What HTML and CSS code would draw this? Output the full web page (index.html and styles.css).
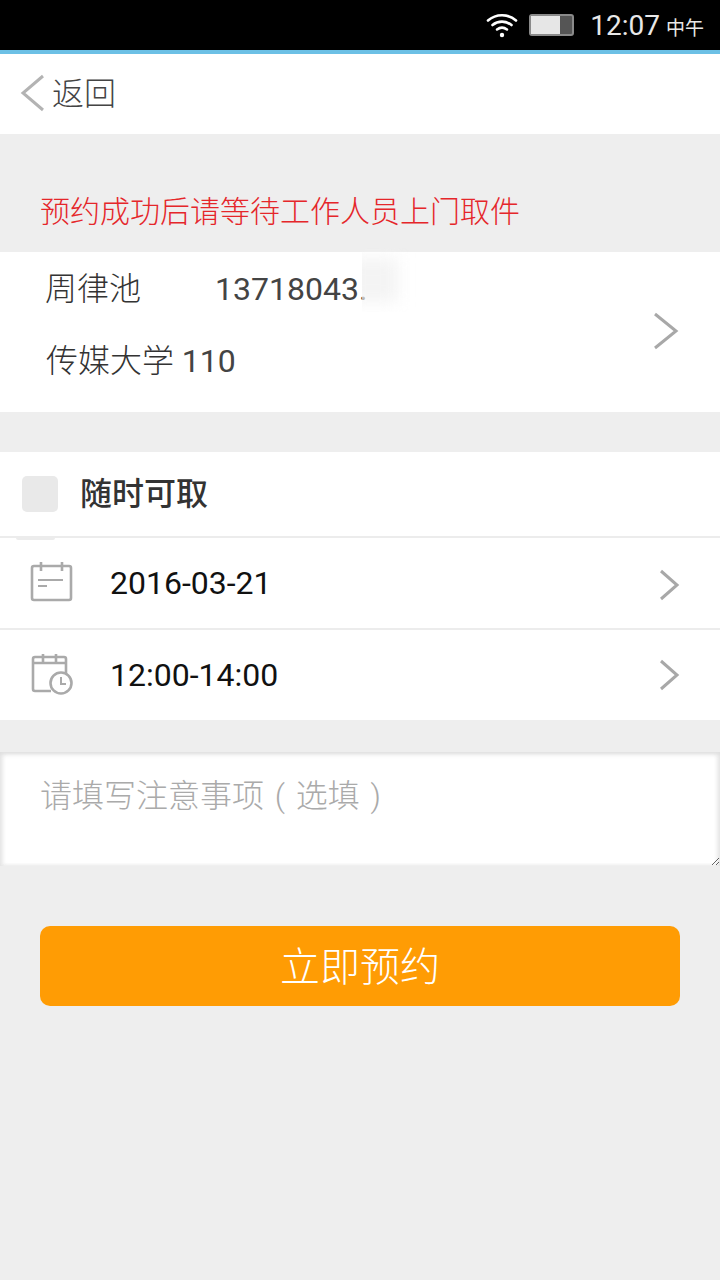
FILE: index.html
```html
<!DOCTYPE html>
<html lang="zh-CN">
<head>
    <meta charset="UTF-8">
    <meta name="viewport" content="width=device-width, initial-scale=1.0">
    <link rel="stylesheet" href="styles.css">
    <title>预约</title>
</head>
<body>
    <div class="status-bar">
        <svg class="wifi" width="32" height="26" viewBox="0 0 32 26" fill="none" stroke="#fff" stroke-width="2.6" stroke-linecap="round">
            <path d="M2 8.5C10 1.5 22 1.5 30 8.5"/>
            <path d="M6.5 13C12 8.5 20 8.5 25.5 13"/>
            <path d="M11 17.5C14 15.2 18 15.2 21 17.5"/>
            <circle cx="16" cy="23" r="2.2" fill="#fff" stroke="none"/>
        </svg>
        <div class="battery"><div class="battery-level"></div></div>
        <span class="clock">12:07</span>
        <span class="clock-suffix">中午</span>
    </div>

    <div class="top-bar">
        <svg class="back-icon" width="26" height="38" viewBox="0 0 26 38" fill="none" stroke="#b3b3b3" stroke-width="3">
            <path d="M23 2L3 19L23 36"/>
        </svg>
        <span class="back-text">返回</span>
    </div>

    <p class="notice">预约成功后请等待工作人员上门取件</p>

    <div class="address">
        <div class="address-text">
            <div class="contact">
                <span class="contact-name">周律池</span>
                <span class="contact-phone">13718043.<span class="phone-blur"></span></span>
            </div>
            <div class="contact-place">传媒大学 <span class="place-num">110</span></div>
        </div>
        <svg class="arrow" width="26" height="38" viewBox="0 0 26 38" fill="none" stroke="#a8a8a8" stroke-width="3">
            <path d="M2 2L23 19L2 36"/>
        </svg>
    </div>

    <div class="pickup">
        <div class="pickup-any">
            <span class="check"></span>
            <span class="pickup-label">随时可取</span>
        </div>
        <div class="pickup-row pickup-row-first">
            <svg class="row-icon" width="44" height="44" viewBox="0 0 44 44" fill="none" stroke="#aaa" stroke-width="2.6">
                <rect x="3" y="6" width="39" height="34" rx="2"/>
                <path d="M12 2V11M33 2V11"/>
                <path d="M9 20H34M9 26H18" stroke-width="2"/>
            </svg>
            <span class="row-value">2016-03-21</span>
            <svg class="arrow-small" width="22" height="32" viewBox="0 0 22 32" fill="none" stroke="#a8a8a8" stroke-width="3">
                <path d="M3 2L19 16L3 30"/>
            </svg>
        </div>
        <div class="pickup-row">
            <svg class="row-icon" width="44" height="44" viewBox="0 0 44 44" fill="none" stroke="#aaa" stroke-width="2.6">
                <path d="M22 39H6a2 2 0 0 1-2-2V7a2 2 0 0 1 2-2h29a2 2 0 0 1 2 2v17"/>
                <path d="M14 2V10M27 2V10M4 11H37"/>
                <circle cx="32" cy="31" r="10.5" fill="#fff"/>
                <path d="M32 25V32H37" stroke-width="2"/>
            </svg>
            <span class="row-value">12:00-14:00</span>
            <svg class="arrow-small" width="22" height="32" viewBox="0 0 22 32" fill="none" stroke="#a8a8a8" stroke-width="3">
                <path d="M3 2L19 16L3 30"/>
            </svg>
        </div>
    </div>

    <textarea class="remark" placeholder="请填写注意事项 ( 选填 )"></textarea>

    <button class="submit" type="button">立即预约</button>
</body>
</html>
```

FILE: styles.css
```css
body {
    margin: 0;
    height: 1280px;
    overflow: hidden;
    background-color: #eeeeee;
    font-family: Roboto, "Noto Sans CJK SC", sans-serif;
    color: #333333;
}

.status-bar {
    height: 50px;
    background-color: #000;
    border-bottom: 4px solid #6cc0e5;
    display: flex;
    align-items: center;
    justify-content: flex-end;
    padding-right: 16px;
    color: #e8e8e8;
}

.wifi {
    margin-right: 11px;
}

.battery {
    width: 41px;
    height: 18px;
    border: 2px solid #8a8a8a;
    border-radius: 3px;
    background-color: #555;
    margin-right: 16px;
}

.battery-level {
    width: 29px;
    height: 100%;
    background-color: #e6e6e6;
}

.clock {
    font-size: 28px;
    margin-right: 6px;
}

.clock-suffix {
    font-size: 19px;
    margin-top: 3px;
}

.top-bar {
    height: 80px;
    background-color: #fff;
    display: flex;
    align-items: center;
    padding-left: 20px;
    font-size: 32px;
    font-weight: 300;
    color: #444;
}

.back-icon {
    margin-right: 6px;
    margin-bottom: 2px;
}

.back-text {
    padding-bottom: 6px;
}

.notice {
    margin: 0;
    height: 118px;
    box-sizing: border-box;
    padding: 55px 0 0 40px;
    font-size: 30px;
    line-height: 46px;
    color: #e5262a;
    font-weight: 300;
}

.address {
    height: 160px;
    background-color: #fff;
    display: flex;
    align-items: center;
    justify-content: space-between;
    padding: 0 41px 0 45px;
    margin-bottom: 40px;
    font-size: 32px;
    font-weight: 300;
}

.address-text {
    margin-bottom: 14px;
}

.contact {
    display: flex;
    height: 72px;
    box-sizing: border-box;
    padding-top: 10px;
    align-items: baseline;
}

.contact-name {
    width: 170px;
}

.contact-phone {
    position: relative;
    font-weight: 400;
    color: #444;
}

.phone-blur {
    position: absolute;
    left: 147px;
    top: -22px;
    width: 60px;
    height: 64px;
    overflow: hidden;
}

.phone-blur::before {
    content: "";
    position: absolute;
    left: -14px;
    top: 10px;
    width: 50px;
    height: 44px;
    background-color: #f4f4f4;
    filter: blur(8px);
}

.contact-place {
    height: 72px;
    line-height: 72px;
    padding-left: 1px;
}

.place-num {
    font-weight: 400;
    color: #444;
}

.arrow {
    margin-bottom: 2px;
}

.pickup {
    background-color: #fff;
    margin-bottom: 32px;
}

.pickup-any {
    height: 84px;
    display: flex;
    align-items: center;
    padding-left: 22px;
}

.check {
    width: 36px;
    height: 36px;
    border-radius: 5px;
    background-color: #e9e9e9;
    margin-right: 22px;
}

.pickup-label {
    font-size: 32px;
    font-weight: 500;
    padding-bottom: 6px;
}

.pickup-row {
    height: 90px;
    border-top: 2px solid #ececec;
    display: flex;
    align-items: center;
    padding: 0 40px 0 29px;
}

.pickup-row-first {
    position: relative;
}

.pickup-row-first .arrow-small {
    margin-top: 3px;
}

/* sliver of the checkbox shadow showing under the divider */
.pickup-row-first::before {
    content: "";
    position: absolute;
    left: 16px;
    top: 0;
    width: 39px;
    height: 2px;
    border-radius: 0 0 3px 3px;
    background-color: #ececec;
}

.row-icon {
    margin-right: 37px;
    margin-bottom: 2px;
}

.row-value {
    flex: 1;
    font-size: 32px;
    color: #111;
}

.remark {
    display: block;
    width: 720px;
    height: 114px;
    box-sizing: border-box;
    margin: 0;
    padding: 18px 40px;
    border: none;
    outline: none;
    background-color: #fff;
    box-shadow: inset 0 2px 5px #dddddd, inset 3px 0 4px #eeeeee, inset -3px 0 4px #eeeeee;
    font-family: Roboto, "Noto Sans CJK SC", sans-serif;
    font-size: 32px;
    font-weight: 300;
    word-spacing: 3px;
}

.remark::placeholder {
    color: #aaaaaa;
    opacity: 1;
}

.submit {
    display: block;
    width: 640px;
    height: 80px;
    margin: 60px 40px 0;
    padding: 0 0 4px;
    border: none;
    border-radius: 10px;
    background-color: #ff9c04;
    color: #fff;
    font-family: Roboto, "Noto Sans CJK SC", sans-serif;
    font-size: 40px;
    font-weight: 300;
    cursor: pointer;
}
```
